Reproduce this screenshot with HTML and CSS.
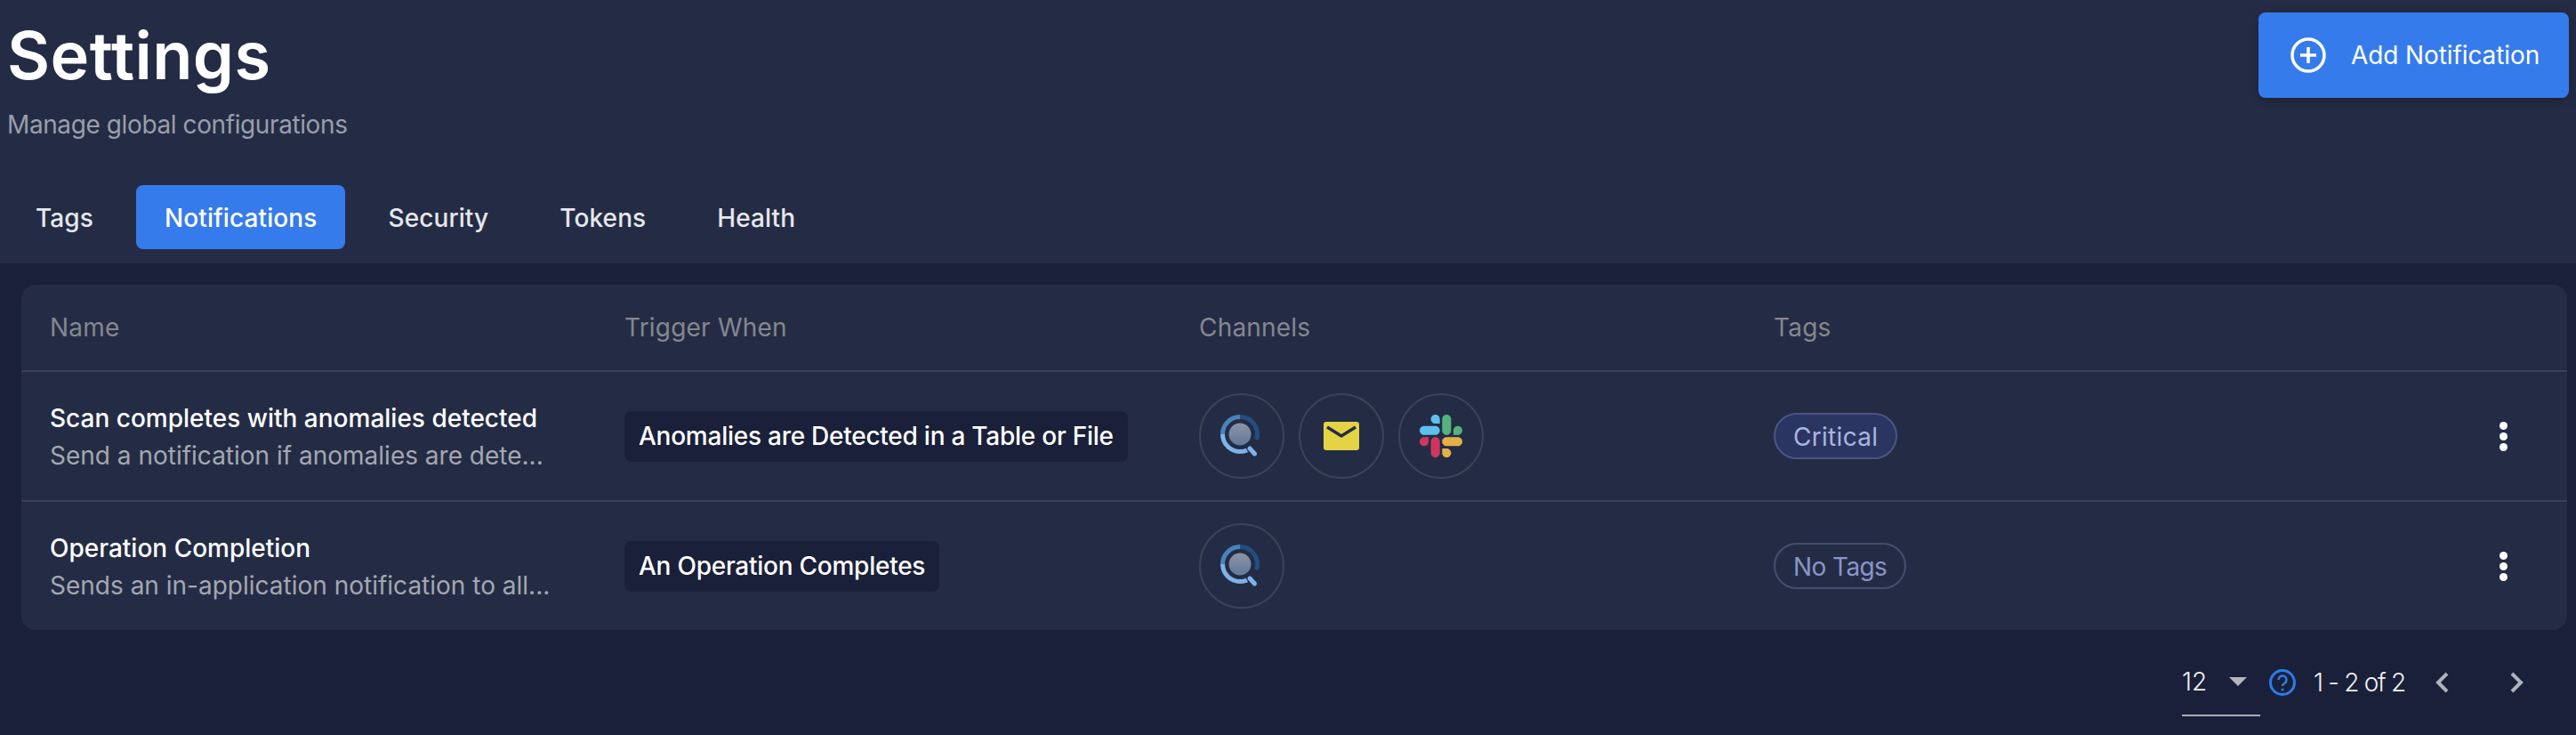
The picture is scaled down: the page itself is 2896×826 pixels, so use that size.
FILE: index.html
```html
<!DOCTYPE html>
<html lang="en">
<head>
    <meta charset="UTF-8">
    <title>Settings</title>
    <link rel="stylesheet" href="styles.css">
</head>
<body>
<svg class="defs" width="0" height="0">
    <defs>
        <linearGradient id="discFill" x1="0" y1="0" x2="0" y2="1">
            <stop offset="0" stop-color="#8d93a6"/>
            <stop offset="1" stop-color="#62799d"/>
        </linearGradient>
        <symbol id="appIcon" viewBox="0 0 48 48">
            <circle cx="22" cy="22" r="12.5" fill="url(#discFill)"/>
            <path d="M22 2.5a19.5 19.5 0 0 1 19.5 19.5c0 1.500-.2 3-.5 4" fill="none" stroke="#234e7e" stroke-width="5" stroke-linecap="round"/>
            <path d="M22 2.500A19.500 19.500 0 0 0 2.500 22" fill="none" stroke="#4a82bd" stroke-width="5"/>
            <path d="M2.500 22A19.500 19.500 0 0 0 22 41.500c3 0 6-.6 8-1.500" fill="none" stroke="#7fb2e8" stroke-width="5"/>
            <path d="M33 38l5.500 6" fill="none" stroke="#7fb2e8" stroke-width="5" stroke-linecap="round"/>
        </symbol>
    </defs>
</svg>

<div class="top">
    <div class="heading">
        <div>
            <h1>Settings</h1>
            <p class="sub">Manage global configurations</p>
        </div>
        <button class="add-btn">
            <svg width="40" height="40" viewBox="0 0 40 40">
                <circle cx="20" cy="20" r="18" fill="none" stroke="#fff" stroke-width="3.500"/>
                <path d="M20 11v18M11 20h18" stroke="#fff" stroke-width="3.500"/>
            </svg>
            <span>Add Notification</span>
        </button>
    </div>
    <ul class="tabs">
        <li>Tags</li>
        <li class="current">Notifications</li>
        <li>Security</li>
        <li>Tokens</li>
        <li>Health</li>
    </ul>
</div>

<div class="content">
    <div class="card">
        <div class="row head">
            <div>Name</div>
            <div>Trigger When</div>
            <div>Channels</div>
            <div>Tags</div>
        </div>
        <div class="row">
            <div>
                <div class="name">Scan completes with anomalies detected</div>
                <div class="desc">Send a notification if anomalies are dete...</div>
            </div>
            <div><span class="trigger">Anomalies are Detected in a Table or File</span></div>
            <div class="channels">
                <span class="channel"><svg width="48" height="48"><use href="#appIcon"/></svg></span>
                <span class="channel">
                    <svg width="40" height="32" viewBox="0 0 40 32">
                        <rect width="40" height="32" rx="3" fill="#e4d344"/>
                        <path d="M4 6l16 10L36 6" fill="none" stroke="#242c45" stroke-width="3.500"/>
                    </svg>
                </span>
                <span class="channel">
                    <svg width="48" height="48" viewBox="0 0 122.800 122.800">
                        <path fill="#cf3560" d="M25.800 77.600c0 7.100-5.800 12.900-12.900 12.900S0 84.700 0 77.600s5.800-12.900 12.900-12.900h12.900v12.900zM32.300 77.600c0-7.100 5.800-12.900 12.900-12.900s12.900 5.800 12.900 12.900v32.300c0 7.100-5.800 12.900-12.900 12.900s-12.900-5.800-12.900-12.900V77.600z"/>
                        <path fill="#5ec0ee" d="M45.200 25.800c-7.100 0-12.900-5.800-12.900-12.900S38.100 0 45.200 0s12.900 5.800 12.900 12.900v12.900H45.200zM45.200 32.300c7.100 0 12.900 5.800 12.900 12.900s-5.800 12.900-12.900 12.900H12.900C5.800 58.100 0 52.300 0 45.200s5.800-12.900 12.900-12.900h32.300z"/>
                        <path fill="#55b27e" d="M97 45.200c0-7.100 5.800-12.900 12.900-12.900s12.900 5.800 12.900 12.900-5.800 12.900-12.900 12.900H97V45.200zM90.500 45.200c0 7.100-5.800 12.900-12.900 12.900s-12.900-5.800-12.900-12.900V12.900C64.700 5.800 70.500 0 77.600 0s12.900 5.800 12.900 12.900v32.300z"/>
                        <path fill="#e4b145" d="M77.600 97c7.100 0 12.900 5.800 12.900 12.900s-5.800 12.900-12.900 12.900-12.900-5.800-12.900-12.900V97h12.900zM77.600 90.500c-7.100 0-12.900-5.800-12.900-12.900s5.800-12.900 12.900-12.900h32.300c7.100 0 12.900 5.800 12.900 12.900s-5.800 12.900-12.900 12.900H77.600z"/>
                    </svg>
                </span>
            </div>
            <div class="tag-cell">
                <span class="tag critical">Critical</span>
                <span class="more"><i></i><i></i><i></i></span>
            </div>
        </div>
        <div class="row">
            <div>
                <div class="name">Operation Completion</div>
                <div class="desc">Sends an in-application notification to all...</div>
            </div>
            <div><span class="trigger">An Operation Completes</span></div>
            <div class="channels">
                <span class="channel"><svg width="48" height="48"><use href="#appIcon"/></svg></span>
            </div>
            <div class="tag-cell">
                <span class="tag empty">No Tags</span>
                <span class="more"><i></i><i></i><i></i></span>
            </div>
        </div>
    </div>

    <div class="pager">
        <div class="per-page">
            <span>12</span>
            <svg width="20" height="10" viewBox="0 0 20 10"><path d="M0 0h20L10 10z" fill="#b4b6be"/></svg>
        </div>
        <svg class="help" width="32" height="32" viewBox="0 0 32 32">
            <circle cx="16" cy="16" r="13.500" fill="none" stroke="#2b7de9" stroke-width="3"/>
            <path d="M11.500 13a4.500 4.500 0 1 1 7 3.700c-1.500 1-2.500 1.800-2.500 3.300" fill="none" stroke="#2b7de9" stroke-width="2.500"/>
            <circle cx="16" cy="24" r="1.500" fill="#2b7de9"/>
        </svg>
        <span class="range">1 - 2 of 2</span>
        <span class="arrows">
            <svg width="16" height="24" viewBox="0 0 16 24"><path d="M13 2L3 12l10 10" fill="none" stroke="#b0b2ba" stroke-width="4"/></svg>
            <svg width="16" height="24" viewBox="0 0 16 24"><path d="M3 2l10 10L3 22" fill="none" stroke="#b0b2ba" stroke-width="4"/></svg>
        </span>
    </div>
</div>
</body>
</html>
```

FILE: styles.css
```css
* {
    padding: 0;
    margin: 0;
    list-style: none;
    box-sizing: border-box;
}

body {
    background: #1a2039;
    color: #fff;
    font-family: "Inter", "Noto Sans", sans-serif;
    height: 826px;
    overflow: hidden;
}

.defs {
    display: block;
    height: 0;
}

.top {
    background: #242c45;
    height: 296px;
    padding: 14px 8px 0 8px;
}

.heading {
    display: flex;
    justify-content: space-between;
    align-items: flex-start;
    height: 194px;
}

h1 {
    font-size: 74px;
    font-weight: 600;
    line-height: 96px;
    letter-spacing: 0.4px;
}

.sub {
    color: #9a9eab;
    font-size: 28px;
    line-height: 40px;
    margin: 10px 0 0 0;
    letter-spacing: -0.4px;
}

.add-btn {
    display: flex;
    align-items: center;
    width: 349px;
    height: 96px;
    padding-left: 36px;
    gap: 28px;
    background: #367beb;
    border: 0;
    border-radius: 8px;
    box-shadow: 0 4px 12px rgba(0, 0, 0, 0.25);
    color: #fff;
    font: 400 28px "Inter", sans-serif;
    letter-spacing: -0.1px;
}

.tabs {
    display: flex;
    gap: 16px;
}

.tabs li {
    height: 72px;
    line-height: 74px;
    padding: 0 32px;
    border-radius: 8px;
    color: #e6e7eb;
    font-size: 28px;
    font-weight: 500;
    letter-spacing: 0.1px;
}

.tabs li.current {
    background: #367beb;
    color: #fff;
}

.content {
    padding: 24px 10px 0 24px;
}

.card {
    background: #242c45;
    border-radius: 16px;
}

.row {
    display: grid;
    grid-template-columns: 646px 646px 646px 1fr;
    align-items: center;
    height: 146px;
    padding: 0 32px;
    border-top: 2px solid #3a4156;
}

.row.head {
    height: 96px;
    border-top: 0;
    color: #85878f;
    font-size: 28px;
    letter-spacing: 0.2px;
}

.name {
    padding-top: 2px;
    font-size: 28px;
    font-weight: 500;
    line-height: 42px;
}

.desc {
    color: #a4a7b2;
    font-size: 28px;
    line-height: 42px;
}

.trigger {
    display: inline-block;
    background: #1a2039;
    border-radius: 8px;
    padding: 0 16px;
    font-size: 28px;
    font-weight: 500;
    line-height: 57px;
    letter-spacing: -0.25px;
}

.channels {
    display: flex;
    gap: 16px;
}

.channel {
    display: flex;
    align-items: center;
    justify-content: center;
    width: 96px;
    height: 96px;
    border: 2px solid #3d4356;
    border-radius: 50%;
}

.tag-cell {
    display: flex;
    align-items: center;
    justify-content: space-between;
    padding-right: 35px;
}

.tag {
    height: 52px;
    line-height: 50px;
    padding: 0 20px;
    border: 2px solid #434e70;
    border-radius: 26px;
    color: #8795c9;
    font-size: 28px;
}

.tag.critical {
    background: #2b3561;
    border-color: #4a5583;
    color: #a9b5e0;
    letter-spacing: 0.3px;
}

.tag.empty {
    letter-spacing: -0.6px;
}

.more {
    display: flex;
    flex-direction: column;
    gap: 3px;
}

.more i {
    display: block;
    width: 9px;
    height: 9px;
    background: #fff;
    border-radius: 50%;
}

.pager {
    display: flex;
    align-items: center;
    height: 118px;
    padding: 0 0 0 2429px;
    color: #f0f1f4;
    font-size: 28px;
    font-weight: 300;
}

.per-page {
    display: flex;
    align-items: center;
    justify-content: space-between;
    width: 88px;
    height: 76px;
    padding: 0 15px 0 0;
    border-bottom: 2px solid #a9abb3;
}

.help {
    margin-left: 9px;
}

.range {
    margin-left: 19px;
    letter-spacing: -1.3px;
}

.arrows {
    display: flex;
    gap: 67px;
    margin-left: 34px;
}
```
